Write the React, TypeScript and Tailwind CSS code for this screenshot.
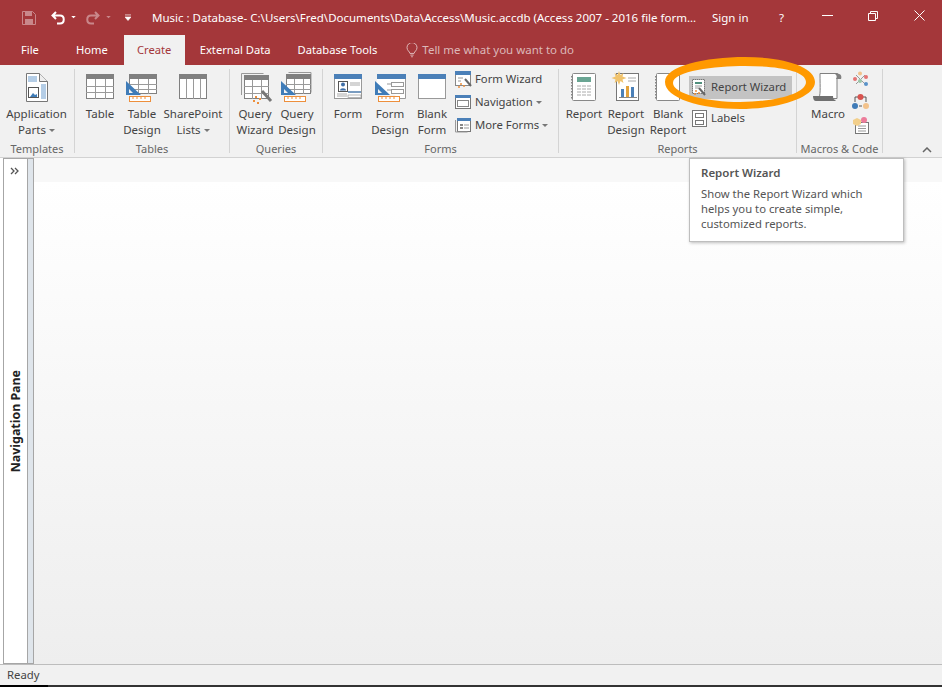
import React from 'react';

const font = "[font-family:'Noto_Sans','Open_Sans',sans-serif]";

const Caret = ({ tight = false }: { tight?: boolean }) => (
  <svg width="6" height="3" viewBox="0 0 6 3" className={`inline-block align-middle ${tight ? '' : 'ml-[3px]'}`}>
    <path d="M0 0h6L3 3z" fill="#777" />
  </svg>
);

const SetSquare = () => (
  <>
    <path d="M3 10l15 14H3z" fill="#3f7cb8" />
    <path d="M6 18l4 4H6z" fill="#f1f1f1" />
    <rect x="6.500" y="25.500" width="21" height="5" fill="#fff" stroke="#ed8f3c" />
    <path d="M10 26v2M14 26v2M18 26v2M22 26v2" stroke="#ed8f3c" />
  </>
);

// table grid icon used by the Tables and Queries groups
const TableIcon = ({ x0 = 5, w = 28, h = 25, top = 3, cols = 3, rows = 3, design = false, wizard = false, back = false }: { x0?: number; w?: number; h?: number; top?: number; cols?: number; rows?: number; design?: boolean; wizard?: boolean; back?: boolean }) => {
  const colXs = Array.from({ length: cols - 1 }, (_, i) => Math.round(x0 + ((i + 1) * w) / cols) + 0.5);
  const rowYs = rows > 1 ? Array.from({ length: rows - 1 }, (_, i) => Math.round(top + 5 + ((i + 1) * (h - 5)) / rows) + 0.5) : [];
  return (
    <svg width="38" height="34" viewBox="0 0 38 34">
      {wizard && <path d="M5.500 24V2.500h22" fill="none" stroke="#999" />}
      {back && <path d="M10.500 1.500h22.500v20" fill="none" stroke="#999" />}
      <rect x={x0 + 0.5} y={top + 0.5} width={w - 1} height={h - 1} fill="#fff" stroke="#808080" />
      <rect x={x0} y={top} width={w} height="5" fill="#808080" />
      {colXs.map(x => (
        <path key={x} d={`M${x} ${top + 5}v${h - 5}`} stroke="#9a9a9a" />
      ))}
      {rowYs.map(y => (
        <path key={y} d={`M${x0} ${y}h${w}`} stroke="#9a9a9a" />
      ))}
      {design && <SetSquare />}
      {wizard && (
        <>
          <path d="M26 20l9 10" stroke="#777" strokeWidth="3" />
          <path d="M19 26h2M23 28h2M17 30h2M21 32h2" stroke="#ed8f3c" strokeWidth="2" />
        </>
      )}
    </svg>
  );
};

const AppPartsIcon = () => (
  <svg width="22" height="29" viewBox="0 0 22 29" className="mt-[2px]">
    <path d="M.500.500h13l8 8v20H.500z" fill="#fff" stroke="#777" />
    <path d="M13.500.500v8h8" fill="#eee" stroke="#777" />
    <rect x="2" y="3" width="9" height="6" fill="#b4cde6" />
    <rect x="15" y="11" width="5" height="15" fill="#b4cde6" />
    <rect x="2.500" y="14.500" width="10" height="10" fill="#fff" stroke="#555" />
    <path d="M4 24l3-4 2 2 2-1v3z" fill="#3f7cb8" />
  </svg>
);

const FormIcon = ({ kind }: { kind: 'form' | 'blank' }) => (
  <svg width="30" height="26" viewBox="0 0 30 26" className="mt-[3px]">
    <rect x="1.500" y=".5" width="27" height="24" fill="#fff" stroke="#999" />
    <rect x="1" y="0" width="28" height="5" fill="#4b80b8" />
    {kind === 'form' && (
      <>
        <rect x="5.500" y="7.500" width="9" height="10" fill="#fff" stroke="#555" />
        <circle cx="10" cy="10.500" r="2" fill="#3f6fa8" />
        <path d="M7 16.500c0-3 6-3 6 0z" fill="#3f6fa8" />
        <path d="M17 9h10M17 11h10M4 20h10M4 22h10" stroke="#aaa" />
        <rect x="15" y="17" width="13" height="2" fill="#7a9cc0" />
        <rect x="15" y="21" width="13" height="2.500" fill="#fff" stroke="#888" strokeWidth=".6" />
      </>
    )}
  </svg>
);

const FormDesignIcon = () => (
  <svg width="32" height="32" viewBox="0 0 32 32" className="mt-[3px]">
    <path d="M3 .5h28.500v24H24" fill="#fff" stroke="#999" />
    <rect x="3" y=".5" width="28" height="20" fill="#fff" />
    <rect x="3" y="0" width="29" height="5" fill="#4b80b8" />
    <path d="M13 10h7M13 16h7" stroke="#999" />
    <rect x="17.500" y="8.500" width="12" height="4" fill="#fff" stroke="#999" />
    <rect x="17.500" y="15.500" width="12" height="4" fill="#fff" stroke="#999" />
    <path d="M1 7l15 14H1z" fill="#3f7cb8" />
    <path d="M4 15l4 4H4z" fill="#f1f1f1" />
    <rect x="4.500" y="22.500" width="21" height="5" fill="#fff" stroke="#ed8f3c" />
    <path d="M8 23v2M12 23v2M16 23v2M20 23v2" stroke="#ed8f3c" />
  </svg>
);

const ReportIcon = ({ kind }: { kind: 'report' | 'design' | 'blank' }) => (
  <svg width="30" height="30" viewBox="0 0 30 30">
    {kind === 'design' && (
      <>
        <rect x="5.500" y="2.500" width="22" height="27" fill="#fff" stroke="#777" />
        <path d="M8 0l1.500 4 3-2-1 3.500 4 1.500-4 1.500 1 3.500-3-2L8 14l-1.500-4-3 2 1-3.500-4-1.500 4-1.500-1-3.500 3 2z" fill="#f0c36d" />
        <path d="M17 7h8M17 10h8" stroke="#aaa" />
        <rect x="10" y="18" width="3" height="8" fill="#4b80b8" />
        <rect x="15" y="15" width="3" height="11" fill="#e2a23c" />
        <rect x="20" y="16" width="3" height="10" fill="#4b80b8" />
        <path d="M8 26.500h18" stroke="#888" />
      </>
    )}
    {kind !== 'design' && (
      <>
        <rect x="3.500" y="2.500" width="23" height="27" rx="1" fill="#fff" stroke="#888" />
        <path d="M3 5v23" stroke="#888" strokeDasharray="1.500 1.500" strokeWidth="2" />
      </>
    )}
    {kind === 'report' && (
      <>
        <rect x="8" y="6" width="14" height="5" fill="#6aa593" />
        <path d="M8 15h14M8 18h14M8 21h14M8 24h14" stroke="#aaa" strokeDasharray="4 1" />
      </>
    )}
  </svg>
);

const MacroIcon = () => (
  <svg width="30" height="30" viewBox="0 0 30 30" className="mt-[2px]">
    <path d="M7 .5h17c3 0 3 5 0 5v20H5c3-2 2-10 2-25z" fill="#fff" stroke="#808080" />
    <path d="M22 1c2 1 2 3 1 5h5c1-2 0-5-2-5z" fill="#808080" />
    <path d="M0 23h20c0 3 1 4 3 4l-1 1H3c-2 0-3-2-3-5z" fill="#707070" />
  </svg>
);

const SmallFormWizard = () => (
  <svg width="17" height="17" viewBox="0 0 17 17">
    <rect x=".5" y=".5" width="15" height="14" fill="#fff" stroke="#888" />
    <rect x="0" y="0" width="16" height="4" fill="#4b80b8" />
    <path d="M3 7h5M3 10h3" stroke="#999" />
    <path d="M10 8l6 7" stroke="#666" strokeWidth="2" />
    <path d="M5 13h2M8 15h2M3 16h2" stroke="#ed8f3c" strokeWidth="1.500" />
  </svg>
);

const SmallNav = () => (
  <svg width="17" height="15" viewBox="0 0 17 15">
    <rect x=".5" y=".5" width="15" height="13" fill="#fff" stroke="#777" />
    <rect x="0" y="0" width="16" height="3" fill="#4b80b8" />
    <rect x="2.500" y="5.500" width="11" height="6" fill="#fff" stroke="#888" />
  </svg>
);

const SmallMore = () => (
  <svg width="17" height="15" viewBox="0 0 17 15">
    <rect x="2.500" y=".5" width="13" height="13" fill="#fff" stroke="#777" />
    <rect x="2" y="0" width="14" height="3" fill="#4b80b8" />
    <path d="M.5 2v12h12" fill="none" stroke="#999" />
    <rect x="5" y="6" width="3" height="2" fill="#888" />
    <rect x="5" y="9" width="3" height="2" fill="#888" />
    <path d="M9 7h5M9 10h5" stroke="#999" />
  </svg>
);

const SmallReportWizard = () => (
  <svg width="15" height="17" viewBox="0 0 15 17">
    <rect x=".5" y=".5" width="12" height="14" fill="#fff" stroke="#777" strokeDasharray="1.500 .5" />
    <rect x="3" y="3" width="7" height="2" fill="#4f8f7c" />
    <path d="M3 7h7M3 9h4" stroke="#999" />
    <path d="M7 9l6 7" stroke="#666" strokeWidth="2" />
    <path d="M3 12h2M6 14h2M2 15h2" stroke="#ed8f3c" strokeWidth="1.500" />
  </svg>
);

const SmallLabels = () => (
  <svg width="15" height="17" viewBox="0 0 15 17">
    <rect x=".5" y=".5" width="14" height="16" fill="#fff" stroke="#777" />
    <rect x="3.500" y="3.500" width="8" height="4" fill="#fff" stroke="#777" />
    <rect x="3.500" y="10.500" width="8" height="4" fill="#fff" stroke="#777" />
  </svg>
);

const MacroSmall = ({ kind }: { kind: 'module' | 'class' | 'vba' }) => (
  <svg width="17" height="17" viewBox="0 0 17 17">
    {kind === 'module' && (
      <>
        <path d="M4 4l9 9M13 4l-9 9" stroke="#999" />
        <circle cx="8" cy="2.500" r="2" fill="#f2c28b" />
        <circle cx="14" cy="6" r="2" fill="#e57373" />
        <circle cx="3" cy="8" r="2" fill="#e57373" />
        <circle cx="8" cy="10" r="2" fill="#9cc6a8" />
        <circle cx="14" cy="13" r="2" fill="#5a93c9" />
      </>
    )}
    {kind === 'class' && (
      <>
        <path d="M3 3h11M3 3v5M14 3v5" fill="none" stroke="#555" />
        <circle cx="8.500" cy="3" r="3" fill="#d9534f" />
        <circle cx="3" cy="12" r="3" fill="#3f7cb8" />
        <circle cx="14" cy="12" r="3" fill="#f2c28b" />
        <path d="M7 12h3" stroke="#555" />
      </>
    )}
    {kind === 'vba' && (
      <>
        <rect x="3.500" y="5.500" width="13" height="11" fill="#fff" stroke="#777" />
        <path d="M6 9h8M6 11.500h8M6 14h8" stroke="#999" />
        <path d="M1 3l4-2 4 2v4l-4 2-4-2z" fill="#f2cf8b" />
        <circle cx="12" cy="3" r="3" fill="#ec7c9a" />
      </>
    )}
  </svg>
);

const LargeButton = ({ w, icon, lines, caret }: { w: number; icon: React.ReactNode; lines: string[]; caret?: boolean }) => (
  <div className="flex shrink-0 flex-col items-center" style={{ width: w }}>
    <div className="flex h-[35px] w-full items-start justify-center">{icon}</div>
    <div className="text-center text-[11.500px] leading-[16px] whitespace-nowrap text-[#444]">
      {lines.map((l, i) => (
        <div key={l}>
          {l}
          {caret && i === lines.length - 1 && <Caret />}
        </div>
      ))}
    </div>
  </div>
);

const SmallButton = ({ icon, label, caret, active }: { icon: React.ReactNode; label: string; caret?: boolean; active?: boolean }) => (
  <div className={`flex h-[23px] items-center gap-[3px] pl-[2px] text-[11.300px] whitespace-nowrap text-[#444] ${active ? 'bg-[#c3c3c3]' : ''}`}>
    <span className="flex w-[17px] justify-center">{icon}</span>
    {label}
    {caret && <Caret tight />}
  </div>
);

const Group = ({ w, label, children }: { w: number; label: string; children: React.ReactNode }) => (
  <div className="relative flex h-full shrink-0 flex-col" style={{ width: w }}>
    <div className="flex min-h-0 flex-1 pt-[6px] pl-[4px]">{children}</div>
    <div className="h-[16px] pr-[1px] text-center text-[11px] leading-[16px] whitespace-nowrap text-[#666]">{label}</div>
    <div className="absolute top-[4px] right-0 bottom-[4px] w-px bg-[#d4d4d4]" />
  </div>
);

export default function App() {
  return (
    <div className={`relative flex h-[687px] w-[942px] flex-col overflow-hidden bg-white ${font}`}>
      {/* title bar */}
      <div className="flex h-[35px] shrink-0 items-center bg-[#a4373a] text-[11.500px] text-white">
        <svg width="14" height="14" viewBox="0 0 14 14" className="ml-[22px]">
          <path d="M.5.5h10l3 3v10H.5z" fill="none" stroke="#c9878a" />
          <rect x="3" y="1" width="7" height="4" fill="#c9878a" />
          <rect x="3" y="8" width="8" height="5" fill="#c9878a" />
        </svg>
        <svg width="14" height="14" viewBox="0 0 14 14" className="ml-[15px]">
          <path d="M5 1L1.500 4.500 5 8M2 4.500h7c5 0 5 8 0 8H6" fill="none" stroke="#fff" strokeWidth="2" />
        </svg>
        <svg width="5" height="3" viewBox="0 0 6 4" className="ml-[6px]"><path d="M0 0h6L3 3z" fill="#fff" /></svg>
        <svg width="14" height="14" viewBox="0 0 14 14" className="ml-[10px]">
          <path d="M9 1l3.500 3.500L9 8M12 4.500H5c-5 0-5 8 0 8h3" fill="none" stroke="#c9878a" strokeWidth="2" />
        </svg>
        <svg width="5" height="3" viewBox="0 0 6 4" className="ml-[6px]"><path d="M0 0h6L3 3z" fill="#c9878a" /></svg>
        <svg width="6" height="7" viewBox="0 0 7 7" className="ml-[14px]"><path d="M0 .5h7M0 3h7L3.500 7z" stroke="#fff" strokeWidth=".8" fill="#fff" /></svg>
        <span className="ml-[21px] w-[545px] whitespace-nowrap">Music : Database- C:\Users\Fred\Documents\Data\Access\Music.accdb (Access 2007 - 2016 file form...</span>
        <span className="absolute left-[712px]">Sign in</span>
        <span className="absolute left-[779px]">?</span>
        <svg width="11" height="1" className="absolute top-[15px] left-[822px]"><rect width="11" height="1" fill="#fff" /></svg>
        <svg width="10" height="10" viewBox="0 0 10 10" className="absolute top-[11px] left-[868px]"><path d="M.5 2.500h7v7h-7zM2.500 2.500v-2h7v7h-2" fill="none" stroke="#fff" /></svg>
        <svg width="11" height="11" viewBox="0 0 11 11" className="absolute top-[10px] left-[914px]"><path d="M.5.5l10 10M10.500.5l-10 10" stroke="#fff" /></svg>
      </div>

      {/* tabs */}
      <div className="flex h-[30px] shrink-0 items-center bg-[#a4373a] text-[11.200px] text-white">
        <span className="ml-[21px]">File</span>
        <span className="ml-[37px]">Home</span>
        <span className="ml-[16px] flex h-full w-[61px] items-center justify-center bg-[#f1f1f1] text-[#a4373a]">Create</span>
        <span className="ml-[15px]">External Data</span>
        <span className="ml-[27px]">Database Tools</span>
        <svg width="12" height="15" viewBox="0 0 14 18" className="ml-[29px]">
          <path d="M4.500 12.500C4 10 1 9 1 5.500a6 6 0 0 1 12 0C13 9 10 10 9.500 12.500zM5 14.500h4M6 16.500h2" fill="none" stroke="#e8cfcf" />
        </svg>
        <span className="ml-[4px] text-[11.500px] text-[#dcb8b9]">Tell me what you want to do</span>
      </div>

      {/* ribbon */}
      <div className="relative flex h-[93px] shrink-0 border-b border-[#d2d2d2] bg-[#f1f1f1]">
        <Group w={75} label="Templates">
          <LargeButton w={65} icon={<AppPartsIcon />} lines={['Application', 'Parts']} caret />
        </Group>
        <Group w={155} label="Tables">
          <LargeButton w={42} icon={<TableIcon />} lines={['Table']} />
          <LargeButton w={42} icon={<TableIcon x0={6} h={20} design />} lines={['Table', 'Design']} />
          <LargeButton w={60} icon={<TableIcon cols={4} rows={1} />} lines={['SharePoint', 'Lists']} caret />
        </Group>
        <Group w={93} label="Queries">
          <LargeButton w={42} icon={<TableIcon x0={8} w={25} h={24} top={4} wizard />} lines={['Query', 'Wizard']} />
          <LargeButton w={42} icon={<TableIcon x0={8} w={25} h={20} back design />} lines={['Query', 'Design']} />
        </Group>
        <Group w={236} label="Forms">
          <LargeButton w={42} icon={<FormIcon kind="form" />} lines={['Form']} />
          <LargeButton w={42} icon={<FormDesignIcon />} lines={['Form', 'Design']} />
          <LargeButton w={42} icon={<FormIcon kind="blank" />} lines={['Blank', 'Form']} />
          <div className="-mt-[3px] flex flex-col">
            <SmallButton icon={<SmallFormWizard />} label="Form Wizard" />
            <SmallButton icon={<SmallNav />} label="Navigation" caret />
            <SmallButton icon={<SmallMore />} label="More Forms" caret />
          </div>
        </Group>
        <Group w={238} label="Reports">
          <LargeButton w={42} icon={<ReportIcon kind="report" />} lines={['Report']} />
          <LargeButton w={42} icon={<ReportIcon kind="design" />} lines={['Report', 'Design']} />
          <LargeButton w={42} icon={<ReportIcon kind="blank" />} lines={['Blank', 'Report']} />
          <div className="flex w-[103px] flex-col gap-[8px] pt-[5px]">
            <SmallButton icon={<SmallReportWizard />} label="Report Wizard" active />
            <SmallButton icon={<SmallLabels />} label="Labels" />
          </div>
        </Group>
        <Group w={86} label="Macros & Code">
          <LargeButton w={54} icon={<MacroIcon />} lines={['Macro']} />
          <div className="-ml-[3px] flex flex-col gap-[6px]">
            <MacroSmall kind="module" />
            <MacroSmall kind="class" />
            <MacroSmall kind="vba" />
          </div>
        </Group>
        <svg width="10" height="6" viewBox="0 0 10 6" className="absolute top-[82px] left-[922px]">
          <path d="M1 5l4-4 4 4" fill="none" stroke="#666" strokeWidth="1.500" />
        </svg>
      </div>

      {/* body */}
      <div className="flex min-h-0 flex-1">
        <div className="ml-[3px] flex w-[31px] shrink-0">
          <div className="flex w-[25px] flex-col border border-[#a6a6a6] bg-white">
            <svg width="9" height="8" viewBox="0 0 9 8" className="mt-[8px] ml-[6px]">
              <path d="M1 1l3 3-3 3M5 1l3 3-3 3" fill="none" stroke="#555" strokeWidth="1.300" />
            </svg>
            <div className="flex flex-1 items-center justify-center pt-[5px] pl-[2px]">
              <span className="rotate-180 text-[12.400px] font-bold whitespace-nowrap text-[#222] [writing-mode:vertical-rl]">Navigation Pane</span>
            </div>
          </div>
          <div className="w-[6px] border-y border-r border-[#a6a6a6] bg-[#dfe5eb]" />
        </div>
        <div className="flex min-w-0 flex-1 flex-col">
          <div className="h-[24px] shrink-0 bg-[#f8f8f8]" />
          <div className="flex-1 bg-gradient-to-b from-white to-[#eeeeee]" />
        </div>
      </div>

      {/* status bar */}
      <div className="flex h-[21px] shrink-0 items-center border-t border-[#bdbdbd] bg-[#f1f1f1] pl-[7px] text-[11.300px] text-[#444]">Ready</div>
      <div className="flex h-[2px] shrink-0 bg-[#333]">
        <div className="w-[48px] bg-black" />
      </div>

      {/* annotation ring over the ribbon */}
      <svg width="160" height="60" viewBox="0 0 160 60" className="absolute top-[54px] left-[660px]">
        <path
          fillRule="evenodd"
          fill="#ff9900"
          d="M5 28C5 12 45 3 85 3s70 10 70 25-35 27-75 27S5 44 5 28zM13 29c0 11 34 19 67 19s66-8 66-20S115 12 85 12 13 17 13 29z"
        />
      </svg>

      {/* tooltip */}
      <div className="absolute top-[158px] left-[689px] h-[84px] w-[215px] border border-[#bebebe] bg-white px-[11px] pt-[5px] text-[11.300px] text-[#555] shadow-[1px_1px_3px_rgba(0,0,0,0.25)]">
        <div className="text-[11.500px] leading-[17px] font-semibold">Report Wizard</div>
        <div className="mt-[5px] leading-[15px]">
          Show the Report Wizard which
          <br />
          helps you to create simple,
          <br />
          customized reports.
        </div>
      </div>
    </div>
  );
}
